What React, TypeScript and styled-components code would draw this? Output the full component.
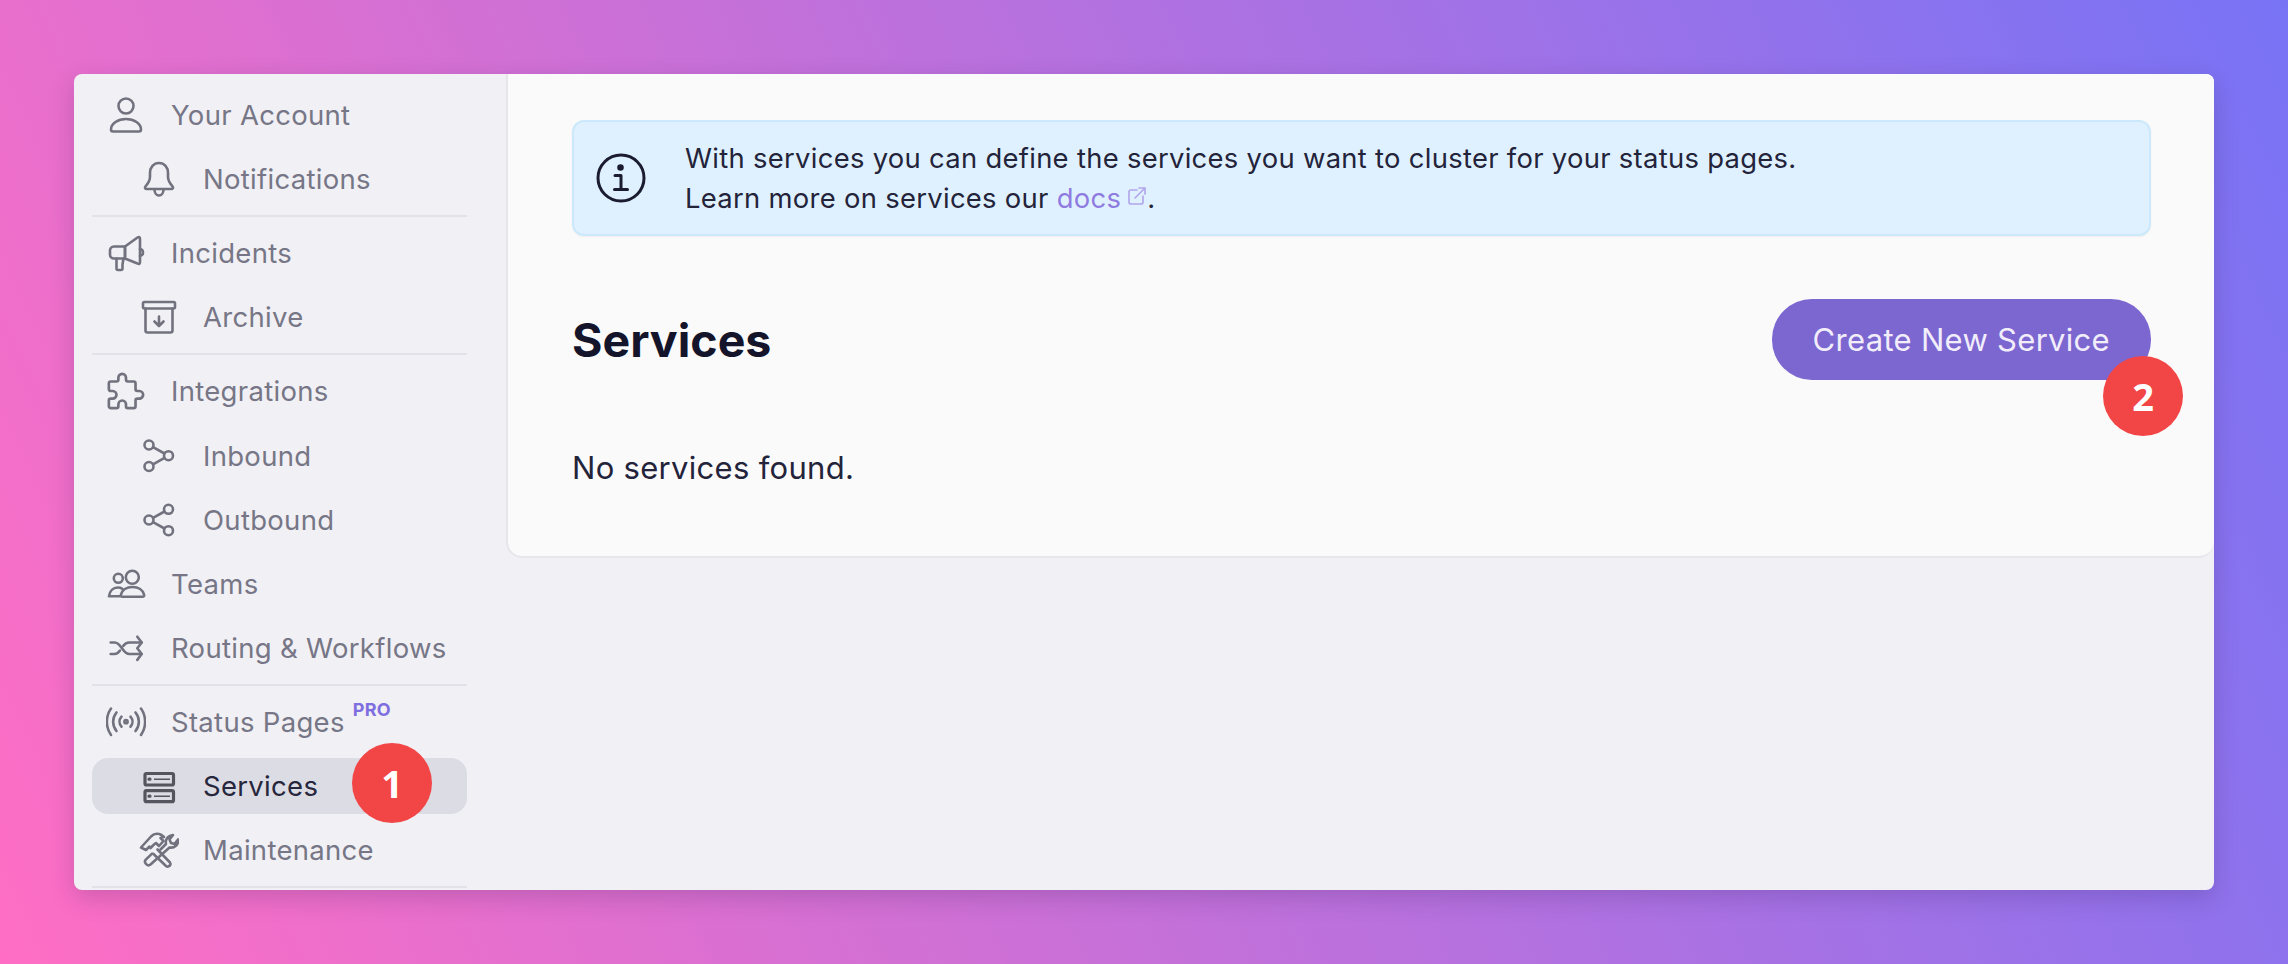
import React from "react";
import styled, { createGlobalStyle } from "styled-components";

const GlobalStyle = createGlobalStyle`
  html, body {
    margin: 0;
    padding: 0;
    height: 100%;
  }
  body {
    font-family: Inter, "Liberation Sans", sans-serif;
  }
`;

const Glyph = ({ children }: { children: React.ReactNode }) => (
  <GlyphSvg viewBox="0 0 40 40">{children}</GlyphSvg>
);

const UserIcon = () => (
  <Glyph>
    <circle cx="20" cy="11" r="7.5" />
    <path d="M7 36.500h26a2 2 0 0 0 2-2c0-6-7-10.500-15-10.500S5 28.500 5 34.500a2 2 0 0 0 2 2z" />
  </Glyph>
);

const BellIcon = () => (
  <Glyph>
    <path d="M20 4c-5.500 0-9 4.500-9 10v4c0 4-2 6.500-4.600 9.500-.9 1.100-.2 2.500 1.200 2.500h24.800c1.400 0 2.100-1.400 1.200-2.500C31 24.500 29 22 29 18v-4c0-5.500-3.500-10-9-10z" />
    <path d="M15.500 30.500c0 3.500 2 6 4.500 6s4.500-2.500 4.500-6" />
  </Glyph>
);

const MegaphoneIcon = () => (
  <Glyph>
    <path d="M19 13.500 31.500 4.500q2.500-1.500 2.500 1.500v23q0 3-2.500 1.500L19 25.500z" />
    <path d="M19 13.500H8a4 4 0 0 0-4 4v4a4 4 0 0 0 4 4h11z" />
    <path d="M10.500 25.500v10a1.500 1.500 0 0 0 1.500 1.500h3a1.500 1.500 0 0 0 1.500-1.500v-4l1-6" />
    <path d="M34 16q3 .5 3 3.500t-3 3.500" />
  </Glyph>
);

const ArchiveIcon = () => (
  <Glyph>
    <rect x="4" y="5" width="32" height="6.500" rx="1.500" />
    <path d="M6.500 11.500v22a2 2 0 0 0 2 2h23a2 2 0 0 0 2-2v-22" />
    <path d="M20 19.500V29M15.500 24.500 20 29l4.500-4.500" />
  </Glyph>
);

const PuzzleIcon = () => (
  <GlyphSvg viewBox="1.500 1.500 21 21" $width={1.4}>
    <path d="M4 7h3a1 1 0 0 0 1-1v-1a2 2 0 0 1 4 0v1a1 1 0 0 0 1 1h3a1 1 0 0 1 1 1v3a1 1 0 0 0 1 1h1a2 2 0 0 1 0 4h-1a1 1 0 0 0-1 1v3a1 1 0 0 1-1 1h-3a1 1 0 0 1-1-1v-1a2 2 0 0 0-4 0v1a1 1 0 0 1-1 1H4a1 1 0 0 1-1-1v-3a1 1 0 0 1 1-1h1a2 2 0 0 0 0-4H4a1 1 0 0 1-1-1V8a1 1 0 0 1 1-1" />
  </GlyphSvg>
);

const InboundIcon = () => (
  <Glyph>
    <circle cx="10" cy="9" r="4.500" />
    <circle cx="29.500" cy="19.700" r="4.500" />
    <circle cx="10" cy="30.500" r="4.500" />
    <path d="M14 11.200l11.500 6.300M14 28.300l11.500-6.400" />
  </Glyph>
);

const OutboundIcon = () => (
  <Glyph>
    <circle cx="29.500" cy="9.300" r="4.500" />
    <circle cx="10" cy="20" r="4.500" />
    <circle cx="29.500" cy="30.700" r="4.500" />
    <path d="M25.500 11.500 14 17.800M14 22.200l11.500 6.300" />
  </Glyph>
);

const TeamsIcon = () => (
  <Glyph>
    <circle cx="12.300" cy="14.300" r="4.500" />
    <circle cx="26.300" cy="13.300" r="6.500" />
    <path d="M17.500 32.800h19c1.300 0 1.900-.8 1.600-2-1.100-4.800-5.800-7.800-11.600-7.800s-10.500 3-11.600 7.800c-.3 1.200.3 2 1.600 2z" />
    <path d="M16.500 24.800c-1.400-.8-3-1.300-4.800-1.300-4.500 0-8 3.300-8.700 8.800h11" />
  </Glyph>
);

const RoutingIcon = () => (
  <Glyph>
    <path d="M4.700 14.500h4c6.500 0 8 11.500 14.500 11.500h12.500" />
    <path d="M35.700 14.500H23.200c-2.500 0-4.500 1.400-6 3.500M14 22.500c-1.500 2.100-3 3.500-5.300 3.500h-4" />
    <path d="M31.300 8.700l4.400 5.800-4.400 5.800M31.300 20.300l4.400 5.700-4.400 5.900" />
  </Glyph>
);

const SignalIcon = () => (
  <Glyph>
    <circle cx="20" cy="19.700" r="1.600" />
    <path d="M15.500 14.700c-2.600 3-2.600 7 0 10M24.500 14.700c2.600 3 2.600 7 0 10" />
    <path d="M10.500 10.500c-4.500 5.500-4.500 13 0 18.500M29.500 10.500c4.500 5.500 4.500 13 0 18.500" />
    <path d="M5 6.500C-.5 14-.5 25.500 5 33M35 6.500C40.500 14 40.500 25.500 35 33" />
  </Glyph>
);

const ServerIcon = () => (
  <GlyphSvg viewBox="0 0 40 40" $width={3.2} $dark>
    <rect x="6" y="7.500" width="28.500" height="11.500" rx="1.500" />
    <rect x="6" y="24.700" width="28.500" height="11" rx="1.500" />
    <path d="M10 13.200h1M10 30.200h1" />
    <ServerSlots d="M15 13.200h16M15 30.200h16" />
  </GlyphSvg>
);

const ToolsIcon = () => (
  <Glyph>
    <path d="M2 17.500 12 6.500c3-3 6.500-3.500 10.500-1.500l2.500 2-3.500 1 3 3-4.500 5-3-3-2 1.500-3.500 3.500-1-1.500-3.500 3.500z" />
    <path d="M18.500 19.500 31 32.500a2.500 2.500 0 0 1 0 3l-1 .5a2.500 2.500 0 0 1-3 0L14.500 24" />
    <path d="M21.500 19.500 27 14c-1-4 1.500-8.500 7-9l-3.500 4.500 1.500 3.500 3.500 1L39 9.500c.8 5-3.500 9-8.500 8L11.500 34.500a3 3 0 0 1-4-.2l-.7-.7a3 3 0 0 1 0-4l6.200-6" />
  </Glyph>
);

const InfoIcon = () => (
  <InfoSvg viewBox="0 0 50 50">
    <circle cx="25" cy="25" r="23" />
    <path d="M19 22.500h6V36M18.500 36.500h13" />
    <circle cx="24.500" cy="14.500" r="1.800" fill="currentColor" />
  </InfoSvg>
);

const ExternalIcon = () => (
  <ExternalSvg viewBox="0 0 20 20">
    <path d="M10 4H4a2 2 0 0 0-2 2v10a2 2 0 0 0 2 2h10a2 2 0 0 0 2-2v-6" />
    <path d="M8 12 18 2M12 2h6v6" />
  </ExternalSvg>
);

const App = () => {
  return (
    <Page>
      <GlobalStyle />
      <Window>
        <Sidebar>
          <NavItem><UserIcon /><span>Your Account</span></NavItem>
          <NavItem $nested><BellIcon /><span>Notifications</span></NavItem>
          <Divider />
          <NavItem><MegaphoneIcon /><span>Incidents</span></NavItem>
          <NavItem $nested><ArchiveIcon /><span>Archive</span></NavItem>
          <Divider />
          <NavItem><PuzzleIcon /><span>Integrations</span></NavItem>
          <NavItem $nested><InboundIcon /><span>Inbound</span></NavItem>
          <NavItem $nested><OutboundIcon /><span>Outbound</span></NavItem>
          <NavItem><TeamsIcon /><span>Teams</span></NavItem>
          <NavItem><RoutingIcon /><span>Routing &amp; Workflows</span></NavItem>
          <Divider />
          <NavItem>
            <SignalIcon />
            <span>Status Pages</span>
            <ProTag>PRO</ProTag>
          </NavItem>
          <NavItem $nested $active>
            <ServerIcon />
            <span>Services</span>
            <StepBadge $place="one">1</StepBadge>
          </NavItem>
          <NavItem $nested><ToolsIcon /><span>Maintenance</span></NavItem>
          <Divider />
        </Sidebar>
        <Content>
          <Card>
            <Notice>
              <InfoIcon />
              <NoticeText>
                With services you can define the services you want to cluster for your status pages.
                <br />
                Learn more on services our <DocsLink>docs<ExternalIcon /></DocsLink>.
              </NoticeText>
            </Notice>
            <TitleRow>
              <Title>Services</Title>
              <CreateButton>
                Create New Service
                <StepBadge $place="two">2</StepBadge>
              </CreateButton>
            </TitleRow>
            <EmptyText>No services found.</EmptyText>
          </Card>
        </Content>
      </Window>
    </Page>
  );
};

export default App;

const Page = styled.div`
  box-sizing: border-box;
  width: 2288px;
  height: 964px;
  padding: 74px;
  overflow: hidden;
  background: linear-gradient(65deg, #ff6ec4, #7873f5);
`;

const Window = styled.div`
  display: flex;
  height: 816px;
  overflow: hidden;
  border-radius: 8px;
  background: #f1f0f5;
  box-shadow: 0 8px 24px rgba(60, 30, 90, 0.22);
`;

const Sidebar = styled.nav`
  box-sizing: border-box;
  flex: 0 0 432px;
  display: flex;
  flex-direction: column;
  gap: 8px;
  padding: 13px 39px 0 18px;
`;

const NavItem = styled.div<{ $nested?: boolean; $active?: boolean }>`
  position: relative;
  flex: 0 0 56.1px;
  display: flex;
  align-items: center;
  gap: ${(p) => (p.$nested ? "24px" : "25px")};
  padding-left: ${(p) => (p.$nested ? "47px" : "14px")};
  border-radius: 16px;
  font-size: 27.5px;
  letter-spacing: 0.3px;
  color: ${(p) => (p.$active ? "#26263c" : "#767686")};
  background: ${(p) => (p.$active ? "#dcdce4" : "transparent")};
`;

const GlyphSvg = styled.svg<{ $width?: number; $dark?: boolean }>`
  flex: 0 0 40px;
  width: 40px;
  height: 40px;
  fill: none;
  stroke: ${(p) => (p.$dark ? "#55555f" : "#72727f")};
  stroke-width: ${(p) => p.$width ?? 2.6};
  stroke-linecap: round;
  stroke-linejoin: round;
`;

const ServerSlots = styled.path`
  stroke-width: 1.6;
  stroke-linecap: butt;
`;

const Divider = styled.div`
  flex: 0 0 2px;
  background: #e2e2e9;
`;

const ProTag = styled.sup`
  align-self: flex-start;
  margin: 5px 0 0 -17px;
  font-size: 18px;
  line-height: 22px;
  font-weight: 700;
  color: #7f6ee0;
`;

const StepBadge = styled.span<{ $place: "one" | "two" }>`
  position: absolute;
  width: 80px;
  height: 80px;
  display: flex;
  align-items: center;
  justify-content: center;
  border-radius: 50%;
  background: #f24646;
  color: #fff;
  font-family: "Open Sans", sans-serif;
  font-size: 38px;
  font-weight: 700;
  letter-spacing: 0;
  ${(p) =>
    p.$place === "one"
      ? "left: 260px; top: -15px;"
      : "right: -32px; bottom: -56px;"}
`;

const Content = styled.main`
  flex: 1;
  min-width: 0;
`;

const Card = styled.section`
  box-sizing: border-box;
  padding: 46px 63px 68px 64px;
  background: #fafafa;
  border-left: 2px solid #e6e6ec;
  border-bottom: 2px solid #e6e6ec;
  border-radius: 0 0 16px 16px;
`;

const Notice = styled.div`
  display: flex;
  align-items: center;
  gap: 39px;
  padding: 16px 22px;
  border: 2px solid #cbe9fb;
  border-radius: 12px;
  background: #dff1ff;
  box-shadow: 0 1px 2px rgba(0, 0, 0, 0.05);
`;

const InfoSvg = styled.svg`
  flex: 0 0 50px;
  width: 50px;
  height: 50px;
  fill: none;
  stroke: #1c1c30;
  stroke-width: 3;
  stroke-linecap: round;
  stroke-linejoin: round;
`;

const NoticeText = styled.p`
  margin: 0;
  font-size: 27.4px;
  line-height: 40px;
  letter-spacing: 0.3px;
  color: #23233a;
`;

const DocsLink = styled.a`
  color: #8f7be0;
`;

const ExternalSvg = styled.svg`
  width: 20px;
  height: 20px;
  margin-left: 6px;
  vertical-align: 2px;
  fill: none;
  stroke: #b3a7ec;
  stroke-width: 1.7;
  stroke-linecap: round;
  stroke-linejoin: round;
`;

const TitleRow = styled.div`
  display: flex;
  align-items: center;
  justify-content: space-between;
  margin-top: 63px;
`;

const Title = styled.h1`
  margin: 0;
  font-size: 46.5px;
  font-weight: 700;
  color: #14142b;
`;

const CreateButton = styled.button`
  position: relative;
  height: 81px;
  padding: 0 41px;
  border: none;
  border-radius: 40px;
  background: #7c66d0;
  color: #f1edfb;
  font-family: Inter, "Liberation Sans", sans-serif;
  font-size: 31px;
  letter-spacing: 0.3px;
`;

const EmptyText = styled.p`
  margin: 68px 0 0;
  font-size: 31px;
  line-height: 40px;
  letter-spacing: 0.3px;
  color: #23233a;
`;
